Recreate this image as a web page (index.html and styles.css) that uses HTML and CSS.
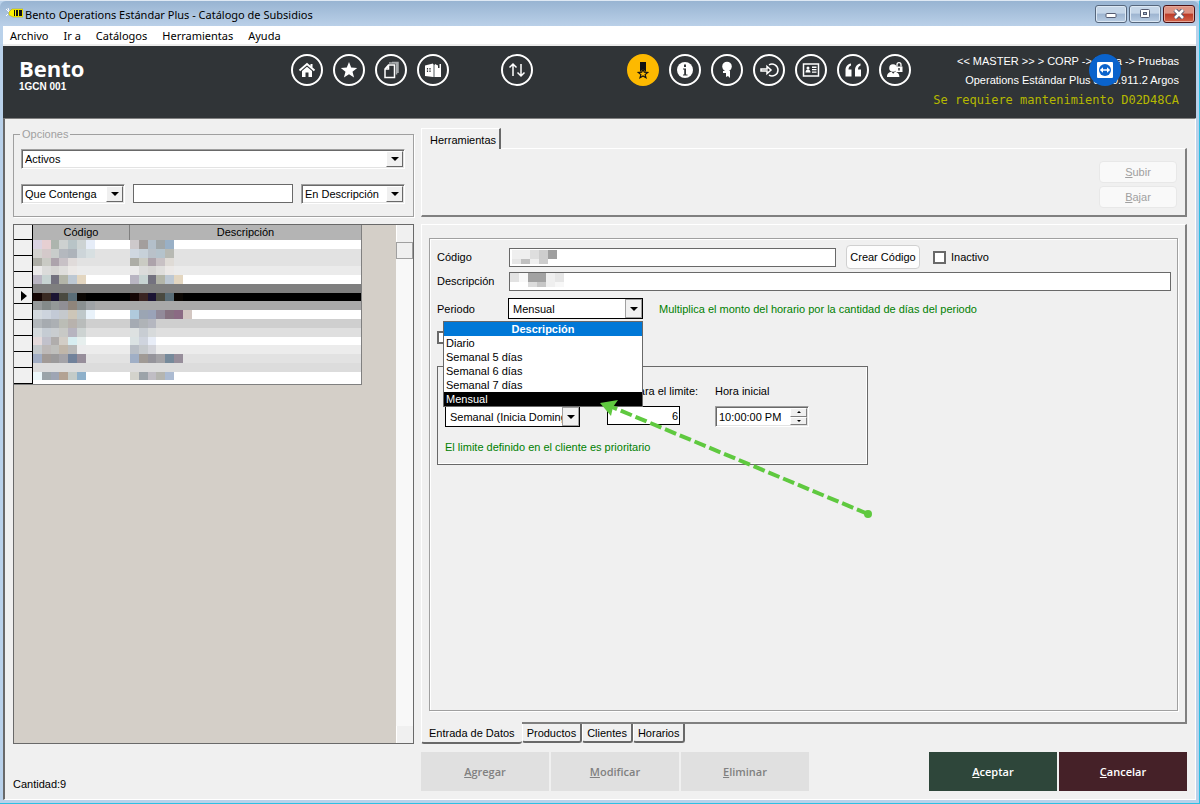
FILE: index.html
```html
<!DOCTYPE html>
<html lang="es">
<head>
<meta charset="utf-8">
<title>Bento Operations Estándar Plus - Catálogo de Subsidios</title>
<link rel="stylesheet" href="styles.css">
</head>
<body>
<div class="window">
  <div class="titlebar">
    <svg class="app-icon" width="18" height="12" viewBox="0 0 18 12" aria-hidden="true"><path d="M1 1l3 3M3 0l1 3M1 8l2-2" stroke="#fff"/><path d="M4 4l3-3h11v8H8L4 7z" fill="#fff200" stroke="#a8a000" stroke-width=".5"/><path d="M9 2h1v6H9zM11 2h2v6h-2zM14 2h3v6h-3z" fill="#111"/></svg>
    <h1 class="title">Bento Operations Estándar Plus - Catálogo de Subsidios</h1>
    <div class="win-buttons">
      <button class="win-btn" aria-label="Minimizar"><svg width="12" height="10" viewBox="0 0 12 10"><rect x="1" y="4.500" width="10" height="4" rx="1" fill="#fff" stroke="#555b70"/></svg></button>
      <button class="win-btn" aria-label="Maximizar"><svg width="12" height="10" viewBox="0 0 12 10"><rect x="1.500" y=".5" width="9" height="8" rx="1" fill="#fff" stroke="#555b70"/><rect x="4.500" y="3.500" width="3" height="2" fill="#a9bdd6" stroke="#555b70"/></svg></button>
      <button class="win-btn win-close" aria-label="Cerrar"><svg width="12" height="10" viewBox="0 0 12 10"><path d="M2 1l8 8M10 1L2 9" stroke="#555b70" stroke-width="4.500"/><path d="M2 1l8 8M10 1L2 9" stroke="#fff" stroke-width="2.500"/></svg></button>
    </div>
  </div>

  <nav class="menu">
    <a href="#">Archivo</a><a href="#">Ir a</a><a href="#">Catálogos</a><a href="#">Herramientas</a><a href="#">Ayuda</a>
  </nav>

  <header class="header">
    <div class="brand">
      <div class="brand-name">Bento</div>
      <div class="brand-code">1GCN 001</div>
    </div>
    <div class="tools">
      <button class="tool" aria-label="Inicio"><svg viewBox="0 0 32 32"><path d="M8.500 16.500L16 10l7.500 6.500M20.500 10v4" fill="none" stroke="#fff" stroke-width="2"/><path d="M11 17l5-4.300 5 4.300v6h-3.500v-4.500h-3V23H11z"/></svg></button>
      <button class="tool" aria-label="Favoritos"><svg viewBox="0 0 32 32"><path d="M16 8l2.200 5.600 6 .3-4.700 3.800 1.600 5.800-5.100-3.300-5.100 3.300 1.600-5.800-4.700-3.800 6-.3z"/></svg></button>
      <button class="tool" aria-label="Copias"><svg viewBox="0 0 32 32" class="line"><path d="M10 15l3.500-4h6v12.500H10zM10 15h3.500v-4" /><path d="M14 9h7.500v11.500M17 8.500h6V19" stroke="#a8acae"/></svg></button>
      <button class="tool" aria-label="Almacén"><svg viewBox="0 0 32 32"><path d="M8 11.500l8-2V23l-8-1z"/><path d="M10.500 14v4M13 14v4" stroke="#303437" stroke-width="1.200"/><path d="M9.500 16h5" stroke="#fff" stroke-width=".8"/><path d="M16 10l2 1v12h-2z" fill="#a8acae"/><path d="M18 10l3 1.500V14h1.500v-4H24v13h-6z"/></svg></button>
    </div>
    <div class="tools tools-sync">
      <button class="tool" aria-label="Sincronizar"><svg viewBox="0 0 32 32" class="line"><path d="M12 22V10M8.500 13.500L12 10l3.500 3.500M20 10v12M16.500 18.500L20 22l3.500-3.500"/></svg></button>
    </div>
    <div class="tools tools-main">
      <button class="tool tool-active" aria-label="Marcador"><svg viewBox="0 0 32 32"><path d="M13 8h6v10l-3-3-3 3z" fill="#111"/><path d="M16 15l1.300 3.200 3.400.2-2.600 2.200.9 3.200-3-1.800-3 1.800.9-3.200-2.600-2.200 3.400-.2z" fill="#fdb900" stroke="#111" stroke-width="1.200"/></svg></button>
      <button class="tool" aria-label="Información"><svg viewBox="0 0 32 32"><circle cx="16" cy="16" r="8"/><path d="M15 10.500h2V13h-2zM14 14.500h3v6h1.500v1H14v-1h1.200v-5H14z" fill="#303437"/></svg></button>
      <button class="tool" aria-label="Premio"><svg viewBox="0 0 32 32"><circle cx="16" cy="12.500" r="4.800"/><path d="M12 17h3v2h-3zM15 17h4v7l-2-2-2 1z"/></svg></button>
      <button class="tool" aria-label="Entrar"><svg viewBox="0 0 32 32" class="line"><path d="M8 15h6v-2.500l4 3.500-4 3.500V17H8z"/><path d="M16 10.800A6 6 0 1 1 16 21.200"/></svg></button>
      <button class="tool" aria-label="Credencial"><svg viewBox="0 0 32 32"><rect x="8.500" y="10" width="15" height="12" fill="none" stroke="#fff" stroke-width="1.500"/><circle cx="13" cy="14" r="1.500"/><path d="M10.500 18.500c0-2 1-3 2.500-3s2.500 1 2.500 3zM17 12.500h4.500V14H17zM17 15h4.500v1.300H17zM17 17.500h4.500v1.300H17z"/></svg></button>
      <button class="tool" aria-label="Citas"><svg viewBox="0 0 32 32"><path d="M14 9.500v2c-1.800.8-2.500 2-2.500 4h3v7H8.500v-6c0-4 2-6.500 5.500-7zM23.500 9.500v2c-1.800.8-2.500 2-2.500 4h3v7H18v-6c0-4 2-6.500 5.500-7z"/></svg></button>
      <button class="tool" aria-label="Usuario bloqueado"><svg viewBox="0 0 32 32"><circle cx="14" cy="14" r="3.800"/><path d="M8 23c0-3.500 2-5 4.500-5.300l1.700 2 1.700-2c2.500.3 4.500 1.800 4.500 5.300z"/><path d="M16.500 12.500h7v5.500h-7z"/><path d="M18 12.500v-1.800a2 2 0 0 1 4 0v1.800" fill="none" stroke="#fff" stroke-width="1.300"/><path d="M20 14v2.500" stroke="#303437" stroke-width="1.500"/></svg></button>
    </div>
    <div class="session">
      <div>&lt;&lt; MASTER &gt;&gt; &gt; CORP -&gt; Barra -&gt; Pruebas</div>
      <div>Operations Estándar Plus 8.0.0.911.2 Argos</div>
      <div class="session-alert">Se requiere mantenimiento D02D48CA</div>
      <svg class="remote" width="32" height="32" viewBox="0 0 32 32" aria-hidden="true"><circle cx="16" cy="16" r="16" fill="#0a63cc"/><rect x="8" y="8" width="16" height="16" rx="1" fill="#fff"/><circle cx="16" cy="16" r="6" fill="#0a63cc"/><path d="M10.800 16l3.200-2.700v1.900h4v-1.900l3.200 2.700-3.200 2.700v-1.900h-4v1.900z" fill="#fff"/></svg>
    </div>
  </header>

  <main class="work">
    <div class="columns">
      <section class="side">
        <fieldset class="options">
          <legend>Opciones</legend>
          <div class="combo"><select aria-label="Estado"><option>Activos</option></select><span class="combo-arrow"></span></div>
          <div class="filters">
            <div class="combo combo-short"><select aria-label="Condición"><option>Que Contenga</option></select><span class="combo-arrow"></span></div>
            <input class="field grow" type="text" aria-label="Texto a buscar">
            <div class="combo combo-short"><select aria-label="Campo"><option>En Descripción</option></select><span class="combo-arrow"></span></div>
          </div>
        </fieldset>
        <div class="list">
          <div class="list-body">
            <table class="grid">
              <thead><tr><th class="mark"></th><th class="col-code">Código</th><th>Descripción</th></tr></thead>
              <tbody>
                <tr><td class="mark"></td><td></td><td></td></tr>
                <tr><td class="mark"></td><td></td><td></td></tr>
                <tr><td class="mark"></td><td></td><td></td></tr>
                <tr><td class="mark"><span class="pointer"></span></td><td></td><td></td></tr>
                <tr><td class="mark"></td><td></td><td></td></tr>
                <tr><td class="mark"></td><td></td><td></td></tr>
                <tr><td class="mark"></td><td></td><td></td></tr>
                <tr><td class="mark"></td><td></td><td></td></tr>
                <tr><td class="mark"></td><td></td><td></td></tr>
              </tbody>
            </table>
            <svg class="mosaic" id="mosaic" viewBox="0 0 37.200 16.400" preserveAspectRatio="none" shape-rendering="crispEdges" aria-hidden="true"></svg>
          </div>
          <div class="scroll"><span class="scroll-up"></span><span class="scroll-thumb"></span><span class="scroll-track"></span><span class="scroll-down"></span></div>
        </div>
      </section>

      <section class="detail">
        <div class="toptabs"><button class="toptab">Herramientas</button></div>
        <div class="toolbox">
          <button class="soft" disabled><u>S</u>ubir</button>
          <button class="soft" disabled><u>B</u>ajar</button>
        </div>
        <div class="page">
          <form class="form">
            <div class="row">
              <label class="name" for="codigo">Código</label>
              <div class="masked masked-code"><input class="field" id="codigo" type="text">
                <svg class="blur" width="45" height="14" viewBox="0 0 45 14" shape-rendering="crispEdges" aria-hidden="true"><path fill="#efefef" d="M0 0h18v9H0zM18 9h9v5h-9z"/><path fill="#dedede" d="M18 0h9v9h-9z"/><path fill="#cdcdcd" d="M27 0h9v14h-9z"/><path fill="#9f9f9f" d="M36 0h9v9h-9z"/><path fill="#e6e6e6" d="M0 9h9v5H0z"/><path fill="#c0c0c0" d="M9 9h9v5H9z"/></svg>
              </div>
              <button class="soft create" type="button">Crear Código</button>
              <label class="check"><input type="checkbox"> Inactivo</label>
            </div>
            <div class="row">
              <label class="name" for="descripcion">Descripción</label>
              <div class="masked grow"><input class="field" id="descripcion" type="text">
                <svg class="blur blur-desc" width="54" height="14" viewBox="0 0 54 14" shape-rendering="crispEdges" aria-hidden="true"><path fill="#e2e2e2" d="M0 0h9v9H0z"/><path fill="#f8f8f8" d="M9 0h9v9H9z"/><path fill="#a2a2a2" d="M18 0h18v9H18z"/><path fill="#efefef" d="M36 0h9v14h-9z"/><path fill="#e6e6e6" d="M45 0h9v9h-9z"/><path fill="#dcdcdc" d="M18 9h9v5h-9z"/><path fill="#c6c6c6" d="M27 9h9v5h-9z"/><path fill="#f7f7f7" d="M45 9h9v5h-9z"/></svg>
              </div>
            </div>
            <div class="row row-period">
              <label class="name" for="periodo">Periodo</label>
              <div class="period">
                <div class="combo combo-flat"><select id="periodo"><option>Mensual</option></select><span class="combo-arrow"></span></div>
                <div class="popup">
                  <div class="popup-head">Descripción</div>
                  <ul class="popup-list">
                    <li>Diario</li><li>Semanal 5 días</li><li>Semanal 6 días</li><li>Semanal 7 días</li><li class="selected">Mensual</li>
                  </ul>
                </div>
              </div>
              <span class="note">Multiplica el monto del horario por la cantidad de días del periodo</span>
            </div>
            <label class="check check-limit"><input type="checkbox" aria-label="Limitar"></label>
            <div class="limit">
              <div class="limit-cell"><label for="tipo">&nbsp;</label><div class="combo combo-flat"><select id="tipo"><option>Semanal (Inicia Domingo)</option></select><span class="combo-arrow"></span></div></div>
              <div class="limit-cell"><label for="cantidad">Días para el limite:</label><input class="field amount" id="cantidad" type="text" value="6"></div>
              <div class="limit-cell"><label for="hora">Hora inicial</label><div class="combo spin"><input id="hora" type="text" value="10:00:00 PM"><span class="spin-btns"><i class="up"></i><i class="down"></i></span></div></div>
              <p class="note limit-note">El limite definido en el cliente es prioritario</p>
            </div>
            <svg class="guide" width="280" height="124" viewBox="0 0 280 124" aria-hidden="true"><path d="M272 116L16 9" stroke="#5fc93f" stroke-width="4" stroke-dasharray="12 4" fill="none"/><circle cx="272" cy="116" r="4" fill="#5fc93f"/><path d="M4 5l18-3-5 7-2 9z" fill="#5fc93f"/></svg>
          </form>
        </div>
        <div class="tabs">
          <button class="tab tab-on">Entrada de Datos</button><button class="tab">Productos</button><button class="tab">Clientes</button><button class="tab">Horarios</button>
        </div>
      </section>
    </div>

    <footer class="footer">
      <div class="count">Cantidad:9</div>
      <div class="actions">
        <button class="action" disabled><u>A</u>gregar</button>
        <button class="action" disabled><u>M</u>odificar</button>
        <button class="action" disabled><u>E</u>liminar</button>
      </div>
      <div class="actions">
        <button class="action accept"><u>A</u>ceptar</button>
        <button class="action cancel"><u>C</u>ancelar</button>
      </div>
    </footer>
  </main>
</div>
<script src="mosaic.js"></script>
</body>
</html>
```
FILE: styles.css
```css
* { box-sizing: border-box; }
body { margin: 0; font: 11px/14px "Liberation Sans", Arial, sans-serif; color: #000; background: #b9d1ea; }
button, input, select { font: inherit; color: inherit; margin: 0; padding: 0; }
button { cursor: pointer; }
.grow { flex: 1; min-width: 0; }

.window { display: flex; flex-direction: column; min-height: 100vh; padding: 0 3px; background: #b9d1ea; border-top: 1px solid #dfe9f4; border-right: 1px solid #2cc0e4; border-bottom: 1px solid #2cc0e4; }

.titlebar { display: flex; align-items: center; height: 25px; margin: 0 -3px; padding: 0 4px 0 5px; background: linear-gradient(#98b4d2, #bad0e8); border-radius: 6px 6px 0 0; }
.app-icon { margin-right: 2px; }
.title { flex: 1; margin: 2px 0 0; font: 11px/16px "Noto Sans", sans-serif; }
.win-buttons { display: flex; gap: 2px; }
.win-btn { display: flex; align-items: center; justify-content: center; width: 32px; height: 18px; border: 1px solid #56677d; border-radius: 3px; background: linear-gradient(#c5d6e8 45%, #9db4d0 50%, #b9cde3); box-shadow: inset 0 0 0 1px #dce8f4; }
.win-close { border-color: #4a1015; background: linear-gradient(#dd9384 45%, #bb3a28 50%, #d4644a); box-shadow: inset 0 0 0 1px #e5a799; }

.menu { display: flex; gap: 15px; height: 20px; padding: 0 7px; background: #fff; border-bottom: 2px solid #ececec; font: 11px/20px "Noto Sans", sans-serif; }
.menu a { color: #000; text-decoration: none; }

.header { display: flex; min-height: 72px; padding: 8px 17px 0 16px; background: #303437; color: #fff; }
.brand { width: 272px; }
.brand-name { font: bold 22px/28px "Open Sans", sans-serif; }
.brand-code { font-size: 10px; font-weight: bold; line-height: 10px; }
.tools { display: flex; gap: 10px; }
.tools-sync { margin-left: 52px; }
.tools-main { margin-left: 94px; }
.tool { width: 32px; height: 32px; border: 2px solid #fff; border-radius: 50%; background: none; }
.tool svg { display: block; width: 32px; height: 32px; margin: -2px; fill: #fff; }
.tool .line { fill: none; stroke: #fff; stroke-width: 1.5; }
.tool-active { background: #fdb900; border-color: #fdb900; }
.session { position: relative; flex: 1; margin-top: -2px; text-align: right; line-height: 19px; white-space: nowrap; }
.session-alert { color: #b5b800; font-family: "DejaVu Sans Mono", monospace; font-size: 12px; line-height: 20px; }
.remote { position: absolute; right: 58px; top: 2px; }

.work { flex: 1; display: flex; flex-direction: column; gap: 8px; padding: 9px 8px 8px; background: #f0f0f0; border: 1px solid #808080; border-left: 2px solid #696969; border-right-color: #fff; border-bottom-color: #fff; margin-bottom: 3px; }
.columns { flex: 1; display: flex; gap: 7px; }

.side { flex: 0 0 401px; display: flex; flex-direction: column; gap: 7px; }
.options { margin: 0; padding: 9px 8px 12px 7px; border: 1px solid #a0a0a0; box-shadow: 1px 1px 0 #fff; min-width: 0; }
.options legend { padding: 0 2px; margin-left: -1px; color: #a0a0a0; line-height: 12px; }
.filters { display: flex; gap: 8px; margin-top: 15px; }

.combo { display: flex; height: 20px; background: #fff; border: 1px solid #a0a0a0; border-right-color: #fff; border-bottom-color: #fff; box-shadow: inset 1px 1px 0 #696969, inset -1px -1px 0 #e3e3e3; padding: 1px; }
.combo select, .combo input { flex: 1; min-width: 0; appearance: none; border: 0; background: none; outline: 0; padding-left: 2px; }
.combo-short { width: 104px; }
.combo-arrow { display: flex; align-items: center; justify-content: center; width: 17px; background: #f0f0f0; border: 1px solid #fff; border-right-color: #696969; border-bottom-color: #696969; }
.combo-arrow::before { content: ""; border: 4px solid transparent; border-top-color: #000; border-bottom: 0; }
.combo-flat { height: 21px; border: 1px solid #000; box-shadow: none; padding: 0; }
.combo-flat select { padding-left: 4px; }
.combo-flat .combo-arrow { border: 1px solid #a0a0a0; }
.field { width: 100%; height: 19px; border: 1px solid #696969; background: #fff; padding: 0 3px; }

.list { flex: 1; display: flex; border: 1px solid #696969; background: #d4cfc8; }
.list-body { flex: 1; position: relative; }
.grid { width: 348px; border-collapse: separate; border-spacing: 0; table-layout: fixed; border-right: 1px solid #808080; border-bottom: 1px solid #808080; }
.grid th, .grid td { height: 16px; padding: 0; background: #fff; font-weight: normal; line-height: 15px; }
.grid th { height: 15px; background: #b4b4b4; border-right: 1px solid #808080; }
.grid th:last-child { border-right: 0; }
.grid .mark { width: 19px; background: #f0f0f0; border-right: 1px solid #000; border-bottom: 1px solid #000; line-height: 0; }
.grid .col-code { width: 97px; }
.pointer { display: inline-block; margin-left: 7px; border: 5px solid transparent; border-left: 6px solid #000; border-right: 0; }
.mosaic { position: absolute; left: 19px; top: 15px; width: 328px; height: 144px; }
.scroll { width: 17px; display: flex; flex-direction: column; background: #f8f8f8; }
.scroll-up, .scroll-down { height: 17px; background: #f0f0f0; border-left: 1px solid #fff; }
.scroll-thumb { height: 17px; background: #f0f0f0; border: 1px solid #a0a0a0; }
.scroll-track { flex: 1; }

.detail { flex: 1; display: flex; flex-direction: column; min-width: 0; }
.toptabs { display: flex; height: 20px; }
.toptab { position: relative; padding: 2px 3px 0 8px; background: #f0f0f0; border: 0; border-left: 1px solid #fff; border-top: 1px solid #fff; border-right: 2px solid #696969; margin-bottom: -1px; }
.toolbox { display: flex; flex-direction: column; align-items: flex-end; gap: 3px; padding: 12px 8px 7px; margin-bottom: 7px; border: 1px solid #fff; border-right: 2px solid #808080; border-bottom: 2px solid #808080; }
.soft { width: 78px; height: 22px; background: #fdfdfd; border: 1px solid #d0d0d0; border-radius: 4px; }
.soft:disabled { color: #a0a0a0; background: #f9f9f9; border-color: #e8e8e8; }
.page { flex: 1; display: flex; padding: 13px 7px 11px; border: 1px solid #fff; border-right: 2px solid #808080; border-bottom: 2px solid #808080; }

.form { flex: 1; position: relative; display: flex; flex-direction: column; padding: 6px 6px 0 7px; border: 1px solid #a0a0a0; box-shadow: 1px 1px 0 #fff, inset 1px 1px 0 #fff; min-width: 0; }
.row { display: flex; align-items: center; height: 24px; }
.row-period { height: 31px; }
.name { width: 72px; }
.masked { position: relative; }
.masked-code { width: 327px; }
.masked .field { display: block; }
.blur { position: absolute; left: 3px; top: 2px; }
.blur-desc { left: 1px; top: 1px; }
.create { width: 74px; height: 24px; margin: 0 13px 0 10px; }
.check { display: flex; align-items: center; gap: 5px; }
.check input { appearance: none; width: 13px; height: 13px; border: 2px solid #696969; background: #fff; }
.period { position: relative; width: 135px; margin-left: -1px; }
.popup { position: absolute; right: 0; top: 23px; width: 200px; border: 1px solid #696969; background: #fff; z-index: 2; }
.popup-head { background: #0078d7; color: #fff; font-weight: bold; text-align: center; }
.popup-list { list-style: none; margin: 0; padding: 0; }
.popup-list li { padding-left: 2px; }
.popup-list .selected { background: #000; color: #fff; }
.note { color: #008000; margin: 0; }
.row .note { margin-left: 16px; }
.check-limit { height: 13px; margin-top: 7px; }
.limit { display: grid; grid-template-columns: 135px 73px 94px; column-gap: 27px; align-content: start; width: 431px; height: 99px; margin-top: 22px; padding: 17px 7px 0; border: 1px solid #696969; box-shadow: inset -1px -1px 0 #fff; }
.limit-cell { display: flex; flex-direction: column; gap: 8px; white-space: nowrap; }
.limit-cell:nth-child(3) { margin: 0 -8px 0 8px; }
.amount { border-color: #000; text-align: right; padding-right: 1px; }
.spin { height: 21px; }
.spin-btns { display: flex; flex-direction: column; width: 17px; }
.spin-btns i { flex: 1; display: flex; align-items: center; justify-content: center; background: #f0f0f0; border: 1px solid #fff; border-right-color: #808080; border-bottom-color: #808080; }
.spin-btns i::before { content: ""; border: 2px solid transparent; }
.spin-btns .up::before { border-bottom-color: #000; border-top: 0; }
.spin-btns .down::before { border-top-color: #000; border-bottom: 0; }
.limit-note { grid-column: 1 / -1; margin-top: 13px; white-space: nowrap; }
.guide { position: absolute; left: 166px; top: 159px; z-index: 3; }

.tabs { display: flex; height: 20px; align-items: flex-start; line-height: 16px; }
.tab { height: 19px; padding: 0 4px; background: #f0f0f0; border: 0; border-left: 1px solid #fff; border-right: 2px solid #696969; border-bottom: 2px solid #696969; border-radius: 0 0 3px 3px; }
.tab-on { height: 22px; margin: -2px 0 0; padding: 2px 7px 0; border-right: 0; position: relative; }

.footer { display: flex; align-items: stretch; min-height: 39px; }
.count { width: 408px; align-self: flex-end; }
.actions { display: flex; gap: 2px; }
.actions:last-child { margin-left: auto; }
.action { width: 128px; border: 0; background: #e0e0e0; font: 600 11px/16px "Open Sans", sans-serif; }
.action:disabled { color: #808080; }
.accept { background: #2e463a; color: #fff; }
.cancel { background: #452128; color: #fff; }
```
FILE: mosaic.js
```javascript
// Pixelated cells of the record list: row background, code cells, description cells.
const rows = [
  ["fff", "dad3e2 e6cfd2 adb5ae cdd1d0 b8c4c7 cdd3d3 e6edf8", "cdc9cb a39e9d b3bfca a1a7a9 99b0c6"],
  ["e2e2e2", "d4d3d0 d4c9ca c9cdcb b4b8be adb3ba cdd5d9 d7dfe1", "cfd7e0 c7d1d9 b9c1c9 b5c3cc b7b9b3"],
  ["e2e2e2", "adada6 c9cac4 ada3ac c8c1c6 e0dbda", "adada6 cacbc3 ada3ab c8c1c4 dfdbd6"],
  ["ebebeb", "ebeaea dbdbda d6d5d3 dfdedc ebe8e6", "ebeaea dbdbda d6d5d3 dfdedc ebe8e6"],
  ["fff", "b9b5c2 c7d3d2 74727f b3b5a8 bdc8d3 e3d6c0", "b9b5c2 c7d3d2 74727f b3b5a8 bdc8d3 e3d6c0"],
  ["7f7f7f", "", ""],
  ["000", "150605 3a2a22 1b1433 4a4a40 5a6d77 0a0603", "150605 3a2422 1b1433 4a4a40 5a6d77 0a0603"],
  ["a9a9a9", "969a9b 848a8a 949898 908f95 8f857b 8a9091 9fa3a6", ""],
  ["fff", "d4dadf cdd4dd c3cad6 c5c9cd cdc6b8 bfc8ca e9f2fa", "b0cadc 9ba5b3 9aa3b8 928b9a 867280 8b6a83 d3c7c2"],
  ["cfcfcf", "b2b7bb a6abb0 acb0b4 bbbdb6 b8b2ad b9bcbb", "a5abb3 afb3b7 b5b7c0"],
  ["dfdfdf", "d5dadd c5ccd3 c9cdd0 c8c9c6 b7b4c0 cdd3d2", "dde1e1 c8cdd3 d7dadb"],
  ["fff", "e5dadb c1c1cb b0adac d2cdc6 d7edf1 e7efee", "dae2e3 cfd4de e8edf7"],
  ["ececec", "c4c9cc bdb9b8 bfbfbc c0b6a9 b9b9b9 ebebec", "b8bec6 c6cacd d4d5db"],
  ["e2e2e2", "a0acc3 a19a96 9b9a9b a4a3a8 71829b 978e9b", "a0afc6 a09a95 95949b a3a2a6 768a9b 978e9b"],
  ["dcdcdc", "", ""],
  ["fff", "ecf8fb 9aa4a9 9ea5b4 b3a293 c4cbc8 8eb0ca", "d3d3cc 9ca3a9 c0bdc4 b5b5b0 acbbd2"],
  ["fff", "", ""]
];
const svg = document.getElementById("mosaic");
function cell(x, y, width, color) {
  const r = document.createElementNS("http://www.w3.org/2000/svg", "rect");
  const attrs = { x, y, width, height: 1, fill: "#" + color };
  for (const key in attrs) r.setAttribute(key, attrs[key]);
  svg.appendChild(r);
}
rows.forEach(([background, code, description], y) => {
  cell(0, y, 38, background);
  code.split(" ").filter(Boolean).forEach((c, i) => cell(i, y, 1, c));
  description.split(" ").filter(Boolean).forEach((c, i) => cell(i + 11, y, 1, c));
});
```
